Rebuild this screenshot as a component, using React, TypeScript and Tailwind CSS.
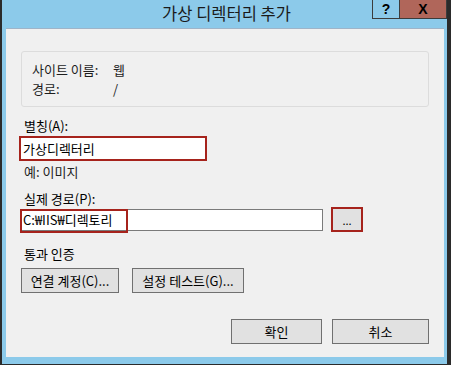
import React from "react";

const font = { fontFamily: '"Malgun Gothic", "Noto Sans CJK KR", "Liberation Sans", sans-serif' };

function Btn({ label, className }: { label: string; className: string }) {
  return (
    <div
      className={`flex h-[25px] items-center justify-center border border-[#707070] bg-[#e1e1e1] text-[13px] leading-none text-black ${className}`}
    >
      {label}
    </div>
  );
}

export default function App() {
  return (
    <div className="h-[365px] w-[451px] overflow-hidden bg-white" style={font}>
      <div className="relative flex h-[365px] w-[451px] flex-col border-b border-l-2 border-r-4 border-[#2b2b2b] bg-[#8ccaea]">
        {/* title bar */}
        <div className="flex h-[28px] shrink-0 items-center justify-center pb-[1px] pl-[4px] text-[16.5px] text-[#1a1a1a]">
          가상 디렉터리 추가
        </div>
        <div className="absolute right-[0px] top-0 flex h-[19px]">
          <div className="flex w-[28px] items-center justify-center border border-t-0 border-[#3c3c3c] text-[14px] font-bold leading-none text-black" style={{ fontFamily: '"Liberation Sans", sans-serif' }}>
            ?
          </div>
          <div className="flex w-[47px] items-center justify-center border border-l-0 border-t-0 border-[#3c3c3c] bg-[#b0665a] text-[14px] font-bold leading-none text-black" style={{ fontFamily: '"Liberation Sans", sans-serif' }}>
            X
          </div>
        </div>

        {/* client area */}
        <div className="ml-[4px] mr-[3px] h-[329px] border-t border-[#9fb4c8] bg-[#f0f0f0] text-[13px] text-black">
          <div className="ml-[15px] mt-[22px] h-[56px] w-[408px] rounded-[3px] border border-[#dcdcdc] pl-[10px] pt-[8px] leading-[19px] text-[#1e1e1e]">
            <div className="flex">
              <span className="w-[81px]">사이트 이름:</span>
              <span>웹</span>
            </div>
            <div className="flex">
              <span className="w-[81px]">경로:</span>
              <span>/</span>
            </div>
          </div>

          <div className="ml-[18px] mt-[11px] leading-[16px]">별칭(A):</div>
          <div className="ml-[13px] mt-[2px] flex h-[25px] w-[188px] items-center border-2 border-[#a6231c] bg-white pl-[2px]">
            가상디렉터리
          </div>

          <div className="ml-[18px] mt-[3px] leading-[16px] text-[#222]">예: 이미지</div>

          <div className="ml-[18px] mt-[11px] leading-[16px]">실제 경로(P):</div>
          <div className="ml-[14px] flex h-[25px] items-center">
            <div className="relative flex h-[22px] w-[303px] items-center border border-[#7a7a7a] bg-white pl-[2px]">
              C:₩IIS₩디렉토리
              <div className="absolute -left-[1px] -top-[1px] h-[24px] w-[108px] border-2 border-[#a6231c]" />
            </div>
            <div className="ml-[8px] flex h-[25px] w-[32px] items-end justify-center border-2 border-[#a6231c] bg-[#e1e1e1] pb-[4px] text-[11px] leading-none">
              ...
            </div>
          </div>

          <div className="ml-[18px] mt-[14px] leading-[16px]">통과 인증</div>
          <div className="ml-[15px] mt-[6px] flex gap-[13px]">
            <Btn label="연결 계정(C)..." className="w-[98px]" />
            <Btn label="설정 테스트(G)..." className="w-[112px]" />
          </div>

          <div className="ml-[225px] mt-[26px] flex gap-[10px]">
            <Btn label="확인" className="w-[91px]" />
            <Btn label="취소" className="w-[97px]" />
          </div>
        </div>
      </div>
    </div>
  );
}
